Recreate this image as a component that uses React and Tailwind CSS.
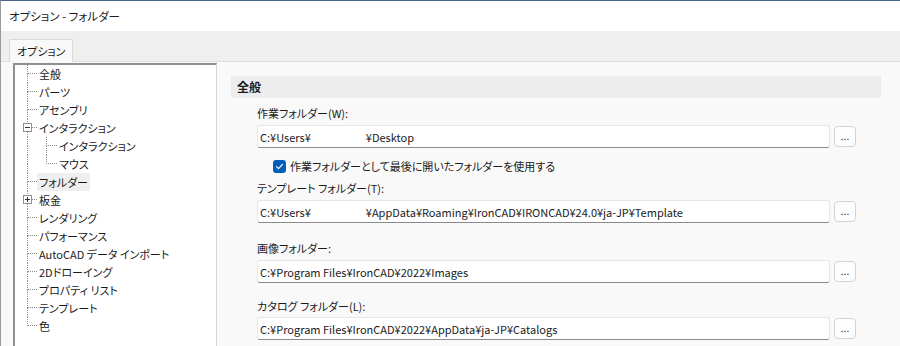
const treeItems = [
  { label: '全般' },
  { label: 'パーツ' },
  { label: 'アセンブリ' },
  { label: 'インタラクション', toggle: 'minus' },
  { label: 'インタラクション', child: true },
  { label: 'マウス', child: true, lastChild: true },
  { label: 'フォルダー', selected: true },
  { label: '板金', toggle: 'plus' },
  { label: 'レンダリング' },
  { label: 'パフォーマンス' },
  { label: 'AutoCAD データ インポート' },
  { label: '2Dドローイング' },
  { label: 'プロパティ リスト' },
  { label: 'テンプレート' },
  { label: '色', last: true },
]

function Gutter({ width, horizontal = true, half = false }) {
  return (
    <div className={`flex flex-col self-stretch ${width}`}>
      <div
        className={`h-[9px] border-l border-dotted border-l-[#8c8c8c] ${
          horizontal ? 'border-b border-b-[#8c8c8c]' : ''
        }`}
      />
      <div className={`flex-1 ${half ? '' : 'border-l border-dotted border-l-[#8c8c8c]'}`} />
    </div>
  )
}

function ToggleBox({ kind }) {
  return (
    <div className="absolute left-[-4px] top-[4px] flex h-[9px] w-[9px] items-center justify-center border border-[#919191] bg-white">
      <svg width="7" height="7" viewBox="0 0 7 7">
        <path d="M1 3.5h5" stroke="#333" strokeWidth="1" />
        {kind === 'plus' && <path d="M3.5 1v5" stroke="#333" strokeWidth="1" />}
      </svg>
    </div>
  )
}

function TreeRow({ item }) {
  return (
    <div className="flex h-[18px] items-stretch">
      {item.child ? (
        <>
          <Gutter width="w-[19px]" horizontal={false} />
          <Gutter width="w-[11px]" half={item.lastChild} />
        </>
      ) : (
        <div className="relative flex">
          <Gutter width="w-[10px]" half={item.last} />
          {item.toggle && <ToggleBox kind={item.toggle} />}
        </div>
      )}
      <span
        className={`flex items-center whitespace-nowrap px-[2px] ${
          item.selected ? 'bg-[#efefef]' : ''
        }`}
      >
        {item.label}
      </span>
    </div>
  )
}

function PathField({ children }) {
  return (
    <div className="flex items-center gap-[4px]">
      <div className="flex h-[23px] flex-1 items-center rounded-[3px] border border-[#e6e6e6] border-b-[#8a8a8a] bg-white pl-[2px] whitespace-nowrap">
        {children}
      </div>
      <button className="flex h-[21px] w-[22px] items-center justify-center rounded-[4px] border border-[#d3d3d3] bg-[#fdfdfd] pb-[2px] text-[10px] text-[#1a1a1a]">
        ...
      </button>
    </div>
  )
}

function Blank() {
  return <span className="inline-block w-[55px]" />
}

export default function App() {
  return (
    <div className="flex h-[346px] w-[900px] flex-col overflow-hidden border-t border-l border-t-[#46648a] border-l-[#9a9a9a] bg-[#f9f9f9] font-['Noto_Sans_CJK_JP',sans-serif] text-[11px] leading-[16px] text-[#1a1a1a] [font-feature-settings:'palt']">
      {/* title bar */}
      <div className="flex h-[30px] items-center bg-white pl-[8px] text-[11.5px]">オプション - フォルダー</div>

      {/* tab strip */}
      <div className="flex h-[31px] items-end border-b border-[#dedede] bg-[#efefef] pl-[8px]">
        <div className="mb-[-1px] flex h-[23px] items-center whitespace-nowrap rounded-t-[2px] border border-b-0 border-[#d9d9d9] bg-[#f9f9f9] px-[7px]">
          オプション
        </div>
      </div>

      <div className="flex flex-1 min-h-0">
        {/* tree */}
        <div className="ml-[12px] mt-[1px] w-[204px] border-t-2 border-l-2 border-r border-t-[#8f8f8f] border-l-[#8f8f8f] border-r-[#d6d6d6] bg-white pl-[12px]">
          {treeItems.map((item, i) => (
            <TreeRow key={i} item={item} />
          ))}
        </div>

        {/* settings */}
        <div className="flex-1 pl-[14px] pr-[19px] pt-[14px]">
          <div className="flex h-[22px] items-center bg-[#ededed] pl-[6px] text-[12px] font-bold">全般</div>

          <div className="pl-[26px] pr-[25px]">
            <div className="mt-[7px] mb-[4px]">作業フォルダー(W):</div>
            <PathField>
              <span>C:¥Users¥</span>
              <Blank />
              <span>¥Desktop</span>
            </PathField>

            <label className="mt-[10px] flex items-center gap-[4px] pl-[16px]">
              <span className="flex h-[13px] w-[13px] items-center justify-center rounded-[3px] bg-[#005fb8]">
                <svg width="9" height="9" viewBox="0 0 9 9" fill="none">
                  <path d="M1.5 4.6l2 2 4-4.2" stroke="white" strokeWidth="1.2" strokeLinecap="round" strokeLinejoin="round" />
                </svg>
              </span>
              作業フォルダーとして最後に開いたフォルダーを使用する
            </label>

            <div className="mt-[6px] mb-[4px]">テンプレート フォルダー(T):</div>
            <PathField>
              <span>C:¥Users¥</span>
              <Blank />
              <span>¥AppData¥Roaming¥IronCAD¥IRONCAD¥24.0¥ja-JP¥Template</span>
            </PathField>

            <div className="mt-[17px] mb-[4px]">画像フォルダー:</div>
            <PathField>
              <span>C:¥Program Files¥IronCAD¥2022¥Images</span>
            </PathField>

            <div className="mt-[15px] mb-[3px]">カタログ フォルダー(L):</div>
            <PathField>
              <span>C:¥Program Files¥IronCAD¥2022¥AppData¥ja-JP¥Catalogs</span>
            </PathField>
          </div>
        </div>
      </div>
    </div>
  )
}
